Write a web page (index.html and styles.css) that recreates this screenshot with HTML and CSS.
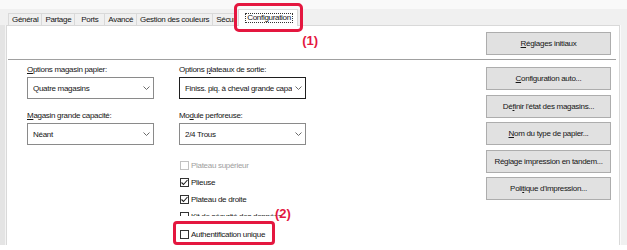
FILE: index.html
```html
<!DOCTYPE html>
<html lang="fr">
<head>
<meta charset="utf-8">
<title>Configuration</title>
<link rel="stylesheet" href="styles.css">
</head>
<body>
<div class="window">
  <div class="tabstrip">
    <div class="tab">Général</div>
    <div class="tab">Partage</div>
    <div class="tab">Ports</div>
    <div class="tab">Avancé</div>
    <div class="tab">Gestion des couleurs</div>
    <div class="tab tab-clipped">Sécurité</div>
    <div class="tab tab-active"><span class="focus">Configuration</span><span class="callout callout-1">(1)</span></div>
  </div>
  <div class="frame">
    <div class="edge edge-left"></div>
    <div class="panel">
      <div class="panel-top">
        <button class="btn"><u>R</u>églages initiaux</button>
      </div>
      <div class="separator"></div>
      <div class="panel-main">
        <div class="options">
          <div class="fields">
            <div class="field">
              <div class="label"><u>O</u>ptions magasin papier:</div>
              <div class="select"><span class="value">Quatre magasins</span><svg class="chev" width="7" height="4" viewBox="0 0 7 4"><polyline points="0.5,0.5 3.5,3.5 6.5,0.5" fill="none" stroke="#6a6a6a" stroke-width="1"/></svg></div>
            </div>
            <div class="field">
              <div class="label">Options <u>p</u>lateaux de sortie:</div>
              <div class="select select-focus"><span class="value">Finiss. piq. à cheval grande capacité</span><svg class="chev" width="7" height="4" viewBox="0 0 7 4"><polyline points="0.5,0.5 3.5,3.5 6.5,0.5" fill="none" stroke="#6a6a6a" stroke-width="1"/></svg></div>
            </div>
            <div class="field">
              <div class="label"><u>M</u>agasin grande capacité:</div>
              <div class="select"><span class="value">Néant</span><svg class="chev" width="7" height="4" viewBox="0 0 7 4"><polyline points="0.5,0.5 3.5,3.5 6.5,0.5" fill="none" stroke="#6a6a6a" stroke-width="1"/></svg></div>
            </div>
            <div class="field">
              <div class="label">Mo<u>d</u>ule perforeuse:</div>
              <div class="select"><span class="value">2/4 Trous</span><svg class="chev" width="7" height="4" viewBox="0 0 7 4"><polyline points="0.5,0.5 3.5,3.5 6.5,0.5" fill="none" stroke="#6a6a6a" stroke-width="1"/></svg></div>
            </div>
          </div>
          <div class="checks">
            <div class="check check-disabled"><span class="box"></span><span>Plateau supérieur</span></div>
            <div class="check"><span class="box"><svg width="7" height="7" viewBox="0 0 7 7"><polyline points="0.5,3.5 2.5,5.5 6.5,1" fill="none" stroke="#222" stroke-width="1.1"/></svg></span><span>Plieuse</span></div>
            <div class="check"><span class="box"><svg width="7" height="7" viewBox="0 0 7 7"><polyline points="0.5,3.5 2.5,5.5 6.5,1" fill="none" stroke="#222" stroke-width="1.1"/></svg></span><span>Plateau de droite</span></div>
            <div class="check-clip">
              <div class="check"><span class="box"></span><span>Kit de sécurité des données</span></div>
            </div>
            <div class="check check-auth"><span class="box"></span><span>Authentification unique</span><span class="callout callout-2">(2)</span></div>
          </div>
        </div>
        <div class="actions">
          <button class="btn"><u>C</u>onfiguration auto...</button>
          <button class="btn">Dé<u>f</u>inir l'état des magasins...</button>
          <button class="btn"><u>N</u>om du type de papier...</button>
          <button class="btn">Ré<u>g</u>lage impression en tandem...</button>
          <button class="btn">Poli<u>t</u>ique d'impression...</button>
        </div>
      </div>
    </div>
    <div class="edge edge-right"></div>
  </div>
</div>
</body>
</html>
```
FILE: styles.css
```css
html, body {
  margin: 0;
  padding: 0;
}
body {
  width: 627px;
  height: 250px;
  overflow: hidden;
  background: #fff;
  font-family: "Liberation Sans", Arial, sans-serif;
  font-size: 8px;
  letter-spacing: -0.3px;
  color: #151515;
}
u {
  text-decoration: underline;
  text-underline-offset: 1px;
}
.window {
  display: flex;
  flex-direction: column;
  height: 243px;
}
.tabstrip {
  height: 25px;
  flex: none;
  display: flex;
  align-items: flex-end;
  padding-left: 8px;
  background: linear-gradient(#f9f9f9 0 9px, #f0f0f0 9px);
  position: relative;
  z-index: 1;
}
.tab {
  height: 12px;
  box-sizing: border-box;
  min-width: 31px;
  line-height: 8px;
  padding: 2px 3px 0;
  border: 1px solid #d9d9d9;
  border-bottom: none;
  margin-right: -1px;
  text-align: center;
  white-space: nowrap;
  background: #f0f0f0;
}
.tab-clipped {
  min-width: 0;
  width: 22px;
  overflow: hidden;
  text-align: left;
  border-right: none;
  padding-right: 0;
}
.tab-active {
  position: relative;
  height: 17px;
  margin-left: 5px;
  margin-bottom: -1px;
  padding: 3px 4px 0 6px;
  background: #fff;
}
.tab-active::after {
  content: "";
  position: absolute;
  top: -7px;
  left: -5px;
  right: -6px;
  bottom: -6px;
  border: 3px solid #e4173f;
  border-radius: 5px;
}
.focus {
  display: inline-block;
  line-height: 8px;
  padding: 0 1px;
  border: 1px dotted #333;
}
.callout {
  position: absolute;
  font-size: 13px;
  line-height: 13px;
  font-weight: bold;
  letter-spacing: 0;
  color: #e4173f;
  white-space: nowrap;
}
.callout-1 {
  left: 63px;
  top: 24px;
}
.frame {
  flex: 1;
  display: flex;
}
.edge-left {
  width: 6px;
  background: #e4e4e4;
  box-shadow: inset -1px 0 #f4f4f4;
}
.edge-right {
  width: 7px;
  background: #f0f0f0;
  box-shadow: inset 1px 0 #fafafa;
}
.panel {
  flex: 1;
  display: flex;
  flex-direction: column;
  background: #fff;
  border: 1px solid #d9d9d9;
  border-bottom: none;
}
.panel-top {
  height: 33px;
  box-sizing: border-box;
  padding: 6px 8px 0 0;
  display: flex;
  justify-content: flex-end;
  align-items: flex-start;
}
.separator {
  height: 1px;
  margin: 0 3px 0 1px;
  background: #a0a0a0;
}
.panel-main {
  flex: 1;
  display: flex;
}
.options {
  flex: 1;
  padding: 5px 0 0 20px;
}
.fields {
  display: grid;
  grid-template-columns: 127px 127px;
  column-gap: 25px;
  row-gap: 12px;
}
.field {
  display: flex;
  flex-direction: column;
}
.label {
  height: 10px;
  line-height: 10px;
  margin-bottom: 2px;
  white-space: nowrap;
}
.select {
  height: 22px;
  box-sizing: border-box;
  border: 1px solid #8a8a8a;
  background: #fff;
  display: flex;
  align-items: center;
  padding: 0 3px 0 5px;
  gap: 3px;
}
.select-focus {
  border-color: #1e1e1e;
}
.value {
  flex: 1;
  overflow: hidden;
  white-space: nowrap;
}
.chev {
  flex: none;
}
.checks {
  margin: 12px 0 0 152px;
  display: flex;
  flex-direction: column;
  align-items: flex-start;
}
.check {
  height: 17px;
  display: flex;
  align-items: center;
  gap: 2px;
  white-space: nowrap;
}
.box {
  width: 9px;
  height: 9px;
  box-sizing: border-box;
  margin-left: 1px;
  border: 1px solid #333;
  background: #fff;
  display: flex;
  align-items: center;
  justify-content: center;
}
.check-disabled {
  color: #a0a0a0;
}
.check-disabled .box {
  border-color: #c2c2c2;
}
.check-clip {
  height: 8px;
  overflow: hidden;
}
.check-auth {
  position: relative;
  margin: 5px 0 0 -6px;
  width: 102px;
  height: 24px;
  box-sizing: border-box;
  padding: 2px 0 0 3px;
  border: 3px solid #e4173f;
  border-radius: 4px;
}
.callout-2 {
  left: 99px;
  top: -17px;
}
.actions {
  width: 125px;
  margin-right: 8px;
  padding-top: 7px;
  display: flex;
  flex-direction: column;
  gap: 4.5px;
}
.btn {
  height: 23px;
  width: 125px;
  box-sizing: border-box;
  border: 1px solid #adadad;
  background: #e1e1e1;
  font: inherit;
  letter-spacing: inherit;
  color: #151515;
  padding: 0;
  margin: 0;
  text-align: center;
  white-space: nowrap;
}
```
